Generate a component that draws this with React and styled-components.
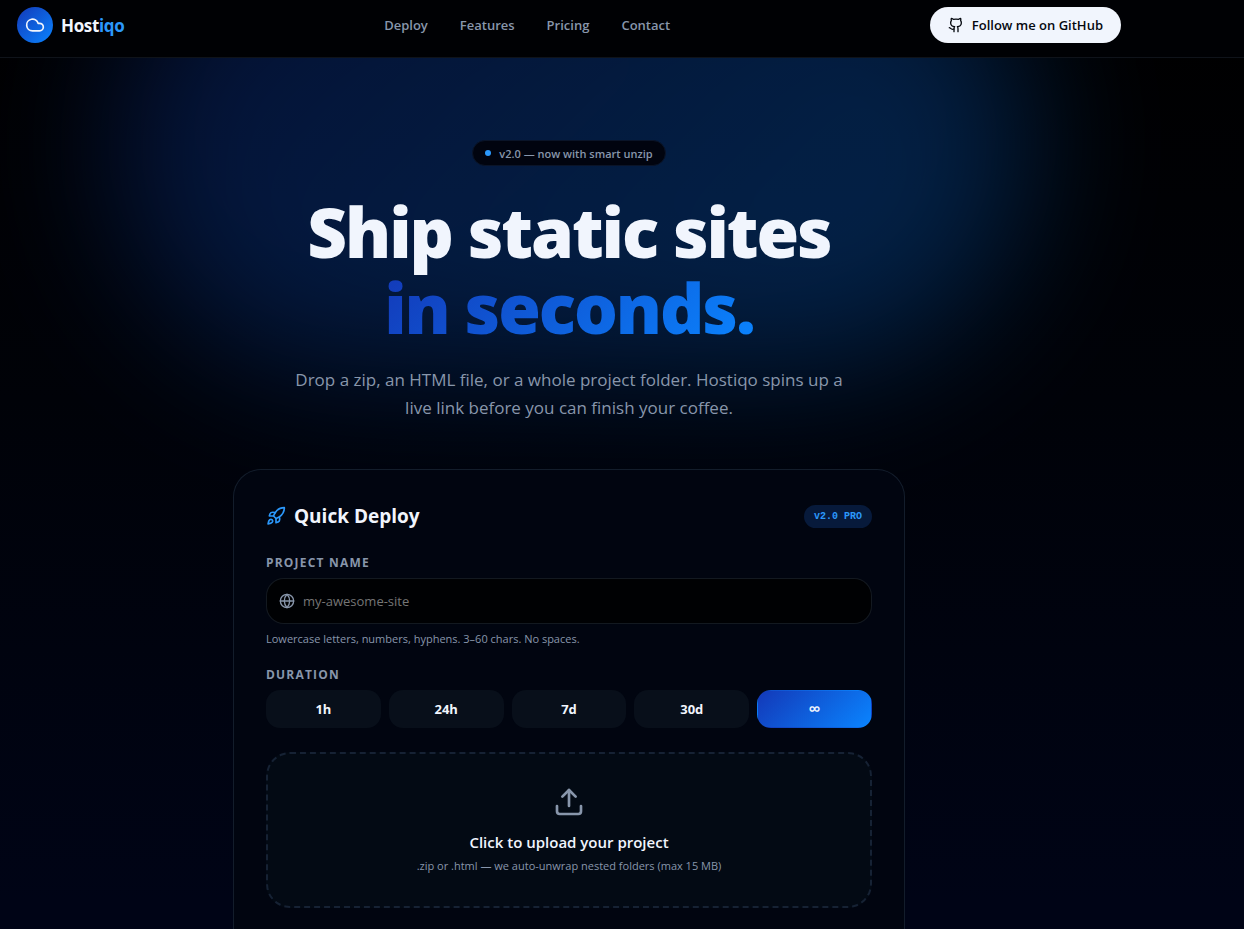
import React, { useState } from 'react';
import styled, { createGlobalStyle } from 'styled-components';
import { Cloud, Github, Globe, Rocket, Upload } from 'lucide-react';

const cText = '#f1f5fd';
const cMuted = '#8896ab';
const cAccent = '#2b98fb';
const cLine = 'rgba(150,190,230,0.13)';
const brandGradient = 'linear-gradient(135deg, #1339b8, #0a84ff)';

const GlobalStyle = createGlobalStyle`
    * {
        box-sizing: border-box;
    }
    body {
        margin: 0;
        background: #000;
        color: ${cText};
        font-family: "Segoe UI", "Open Sans", "Noto Sans", sans-serif;
        font-size: 14px;
    }
    button, input {
        font-family: inherit;
    }
`;

const Page = styled.div`
    position: relative;
    min-height: 100vh;
    overflow: hidden;
    background: linear-gradient(180deg, #000 0, #000208 400px, #000416 900px);
`;

const Glow = styled.div`
    position: absolute;
    top: -90px;
    left: 109px;
    right: 215px;
    height: 460px;
    border-radius: 230px;
    background: ${brandGradient};
    opacity: 0.28;
    filter: blur(70px);
    pointer-events: none;
`;

const Header = styled.header`
    position: relative;
    background: #000104;
    border-bottom: 1px solid rgba(150,190,230,0.1);
`;

const HeaderInner = styled.div`
    display: flex;
    justify-content: space-between;
    align-items: center;
    margin-right: 106px;
    padding: 7px 17px 14px;
`;

const Brand = styled.a`
    display: flex;
    align-items: center;
    gap: 8px;
    color: ${cText};
    font-size: 17px;
    font-weight: 700;
    letter-spacing: -0.02em;
    text-decoration: none;
`;

const BrandMark = styled.span`
    display: flex;
    justify-content: center;
    align-items: center;
    width: 36px;
    height: 36px;
    border-radius: 50%;
    background: ${brandGradient};
`;

const Accent = styled.span`
    color: ${cAccent};
`;

const Nav = styled.nav`
    display: flex;
    gap: 32px;
`;

const NavLink = styled.a`
    color: ${cMuted};
    font-size: 13px;
    font-weight: 600;
    line-height: 20px;
    text-decoration: none;
`;

const GithubLink = styled.a`
    display: flex;
    align-items: center;
    gap: 8px;
    height: 36px;
    padding: 0 18px;
    border-radius: 18px;
    background: ${cText};
    color: #05080f;
    font-size: 13px;
    font-weight: 600;
    text-decoration: none;
`;

const Main = styled.main`
    position: relative;
    display: flex;
    flex-direction: column;
    align-items: center;
    margin-right: 106px;
    padding: 82px 16px 64px;
`;

const Pill = styled.div`
    display: flex;
    align-items: center;
    gap: 8px;
    height: 26px;
    padding: 0 12px;
    border: 1px solid #0a1428;
    border-radius: 13px;
    background: #01040f;
    color: ${cMuted};
    font-size: 11px;
    font-weight: 600;
`;

const Dot = styled.span`
    width: 6px;
    height: 6px;
    border-radius: 50%;
    background: ${cAccent};
`;

const Title = styled.h1`
    margin: 27px 0 0;
    font-size: 69px;
    font-weight: 800;
    line-height: 76px;
    letter-spacing: -0.03em;
    text-align: center;
`;

const TitleAccent = styled.span`
    display: block;
    width: fit-content;
    margin: 0 auto;
    background: ${brandGradient};
    background-clip: text;
    color: transparent;
`;

const Lead = styled.p`
    max-width: 576px;
    margin: 21px 0 0;
    color: ${cMuted};
    font-size: 17px;
    font-weight: 400;
    line-height: 28px;
    text-align: center;
`;

const Card = styled.form`
    width: 100%;
    max-width: 672px;
    margin-top: 47px;
    padding: 32px 32px 64px;
    border: 1px solid ${cLine};
    border-radius: 28px;
    background: #010510;
`;

const CardHeader = styled.div`
    display: flex;
    justify-content: space-between;
    align-items: center;
    height: 28px;
    margin-bottom: 24px;
`;

const CardTitle = styled.h2`
    display: flex;
    align-items: center;
    gap: 8px;
    margin: 0;
    font-size: 19px;
    font-weight: 700;
`;

const Badge = styled.span`
    padding: 0 10px;
    border-radius: 12px;
    background: #071a3b;
    color: ${cAccent};
    font-family: "Liberation Mono", monospace;
    font-size: 10px;
    font-weight: 700;
    line-height: 23px;
`;

const Field = styled.fieldset`
    margin: 0;
    padding: 0;
    border: none;
    & + & {
        margin-top: 18px;
    }
`;

const Label = styled.label`
    display: block;
    margin-bottom: 6px;
    padding: 0;
    color: ${cMuted};
    font-size: 12px;
    font-weight: 700;
    line-height: 18px;
    letter-spacing: 0.1em;
    text-transform: uppercase;
`;

const InputBox = styled.div`
    display: flex;
    align-items: center;
    gap: 8px;
    height: 46px;
    padding: 0 12px;
    border: 1px solid ${cLine};
    border-radius: 18px;
    background: #000103;
    color: ${cMuted};
`;

const Input = styled.input`
    flex: 1;
    min-width: 0;
    padding: 0;
    border: none;
    outline: none;
    background: transparent;
    color: ${cText};
    font-size: 13px;
    &::placeholder {
        color: #757575;
    }
`;

const Hint = styled.p`
    margin: 6px 0 0;
    color: ${cMuted};
    font-size: 11px;
    line-height: 18px;
`;

const Durations = styled.div`
    display: grid;
    grid-template-columns: repeat(5, 1fr);
    gap: 8px;
`;

const DurationButton = styled.button`
    height: 38px;
    padding: 0;
    border: 1px solid transparent;
    border-radius: 14px;
    background: ${p => p.$active ? brandGradient : '#080f1a'};
    color: ${cText};
    font-size: ${p => p.$symbol ? '17px' : '13px'};
    font-weight: ${p => p.$symbol ? 600 : 700};
    line-height: 20px;
    cursor: pointer;
`;

const DropZone = styled.button`
    display: flex;
    flex-direction: column;
    align-items: center;
    width: 100%;
    margin-top: 24px;
    padding: 32px 16px 28px;
    border: 2px dashed #162234;
    border-radius: 24px;
    background: #030a14;
    color: ${cMuted};
    cursor: pointer;
`;

const DropTitle = styled.span`
    margin-top: 12px;
    color: ${cText};
    font-size: 15px;
    font-weight: 600;
    line-height: 24px;
`;

const DropHint = styled.span`
    font-size: 11px;
    line-height: 24px;
`;

const links = ['Deploy', 'Features', 'Pricing', 'Contact'];
const durations = ['1h', '24h', '7d', '30d', '∞'];

export default function App() {
    const [name, setName] = useState('');
    const [duration, setDuration] = useState('∞');

    return (
        <Page>
            <GlobalStyle />
            <Glow />
            <Header>
                <HeaderInner>
                    <Brand href="#">
                        <BrandMark><Cloud size={20} /></BrandMark>
                        <span>Host<Accent>iqo</Accent></span>
                    </Brand>
                    <Nav>
                        {links.map(l => <NavLink key={l} href={`#${l.toLowerCase()}`}>{l}</NavLink>)}
                    </Nav>
                    <GithubLink href="#github">
                        <Github size={16} />
                        Follow me on GitHub
                    </GithubLink>
                </HeaderInner>
            </Header>
            <Main>
                <Pill><Dot />v2.0 — now with smart unzip</Pill>
                <Title>
                    Ship static sites
                    <TitleAccent>in seconds.</TitleAccent>
                </Title>
                <Lead>
                    Drop a zip, an HTML file, or a whole project folder. Hostiqo spins up a
                    live link before you can finish your coffee.
                </Lead>
                <Card onSubmit={e => e.preventDefault()}>
                    <CardHeader>
                        <CardTitle><Rocket size={20} color={cAccent} />Quick Deploy</CardTitle>
                        <Badge>v2.0 PRO</Badge>
                    </CardHeader>
                    <Field>
                        <Label htmlFor="project-name">Project name</Label>
                        <InputBox>
                            <Globe size={16} />
                            <Input
                                id="project-name"
                                placeholder="my-awesome-site"
                                value={name}
                                onChange={e => setName(e.target.value)}
                            />
                        </InputBox>
                        <Hint>Lowercase letters, numbers, hyphens. 3–60 chars. No spaces.</Hint>
                    </Field>
                    <Field>
                        <Label as="legend">Duration</Label>
                        <Durations>
                            {durations.map(d => (
                                <DurationButton
                                    key={d}
                                    type="button"
                                    $active={d === duration}
                                    $symbol={d === '∞'}
                                    aria-pressed={d === duration}
                                    onClick={() => setDuration(d)}
                                >{d}</DurationButton>
                            ))}
                        </Durations>
                    </Field>
                    <DropZone type="button">
                        <Upload size={32} />
                        <DropTitle>Click to upload your project</DropTitle>
                        <DropHint>.zip or .html — we auto-unwrap nested folders (max 15 MB)</DropHint>
                    </DropZone>
                </Card>
            </Main>
        </Page>
    );
}
